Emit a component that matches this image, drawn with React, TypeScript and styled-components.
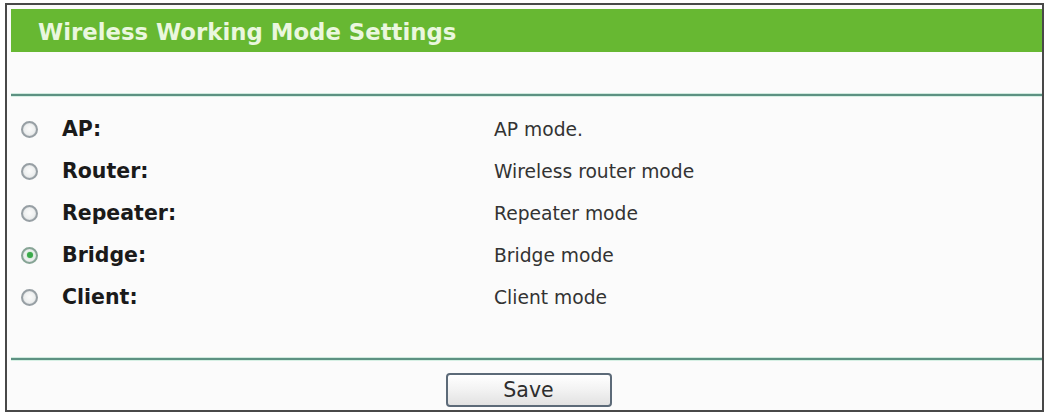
import React, { useState } from "react";
import styled, { createGlobalStyle } from "styled-components";

const Global = createGlobalStyle`
  html, body { margin: 0; padding: 0; background: #ffffff; }
  body { font-family: "DejaVu Sans", "Liberation Sans", Arial, sans-serif; }
`;

const Frame = styled.div`
  box-sizing: border-box;
  margin: 3px 0 0 5px;
  width: 1039px;
  height: 409px;
  border: 2px solid #484848;
  padding: 4px 0 0 4px;
  background: #fbfbfb;
  display: flex;
  flex-direction: column;
`;

const Header = styled.div`
  height: 43px;
  background: #67b832;
  display: flex;
  align-items: center;
  padding-left: 27px;
`;

const Title = styled.h1`
  margin: 0;
  font-family: "DejaVu Sans", "Liberation Sans", sans-serif;
  font-weight: bold;
  font-size: 22.8px;
  color: #eaf7de;
  position: relative;
  top: 1px;
`;

const Spacer = styled.div<{ $h: number }>`
  height: ${(p) => p.$h}px;
  flex: none;
`;

const Rule = styled.div`
  height: 2px;
  background: #5d9182;
  box-shadow: 0 -1px 0 #cfeade, 0 1px 0 #d6f0e4;
  flex: none;
`;

const List = styled.div`
  display: flex;
  flex-direction: column;
`;

const Row = styled.label`
  height: 42px;
  display: flex;
  align-items: center;
  cursor: pointer;
`;

const Radio = styled.span<{ $on: boolean }>`
  box-sizing: border-box;
  width: 17px;
  height: 17px;
  margin-left: 10px;
  border-radius: 50%;
  border: 2px solid ${(p) => (p.$on ? "#86a495" : "#979fa4")};
  background: radial-gradient(circle at 50% 45%, #fbfbfb 0%, #eceeee 60%, #dcdfe0 100%);
  box-shadow: inset 0 0 1px #b8bec2;
  display: flex;
  align-items: center;
  justify-content: center;
  flex: none;
  &::after {
    content: "";
    width: 6px;
    height: 6px;
    border-radius: 50%;
    background: ${(p) => (p.$on ? "#3aa94a" : "transparent")};
    box-shadow: ${(p) => (p.$on ? "0 0 2px #7fd489" : "none")};
  }
`;

const Name = styled.span`
  margin-left: 24px;
  width: 432px;
  font-family: "DejaVu Sans", "Liberation Sans", sans-serif;
  font-weight: bold;
  font-size: 20.5px;
  color: #1a1a1a;
`;

const Desc = styled.span`
  font-family: "DejaVu Sans", "Liberation Sans", sans-serif;
  font-size: 18.7px;
  color: #333333;
`;

const Footer = styled.div`
  display: flex;
  justify-content: center;
  padding-top: 13px;
  padding-left: 4px;
`;

const SaveButton = styled.button`
  box-sizing: border-box;
  width: 166px;
  height: 34px;
  border: 2px solid #5c6a78;
  border-radius: 4px;
  background: linear-gradient(#ffffff, #f2f2f2 50%, #e2e2e2);
  font-family: "DejaVu Sans", "Liberation Sans", sans-serif;
  font-size: 20.5px;
  color: #2e2e2e;
  padding: 0;
  cursor: pointer;
`;

const modes = [
  { key: "ap", name: "AP:", desc: "AP mode." },
  { key: "router", name: "Router:", desc: "Wireless router mode" },
  { key: "repeater", name: "Repeater:", desc: "Repeater mode" },
  { key: "bridge", name: "Bridge:", desc: "Bridge mode" },
  { key: "client", name: "Client:", desc: "Client mode" },
];

export default function App() {
  const [mode, setMode] = useState("bridge");
  return (
    <>
      <Global />
      <Frame>
        <Header>
          <Title>Wireless Working Mode Settings</Title>
        </Header>
        <Spacer $h={42} />
        <Rule />
        <Spacer $h={12} />
        <List>
          {modes.map((m) => (
            <Row key={m.key} onClick={() => setMode(m.key)}>
              <Radio $on={mode === m.key} />
              <Name>{m.name}</Name>
              <Desc>{m.desc}</Desc>
            </Row>
          ))}
        </List>
        <Spacer $h={40} />
        <Rule />
        <Footer>
          <SaveButton>Save</SaveButton>
        </Footer>
      </Frame>
    </>
  );
}
